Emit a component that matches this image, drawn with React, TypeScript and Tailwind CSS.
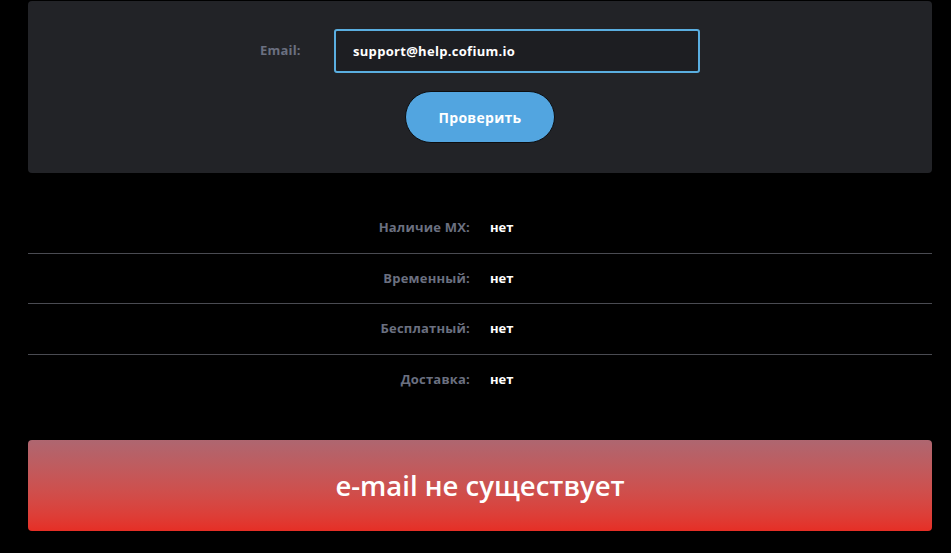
import React from 'react';

const rows = [
  { label: 'Наличие MX:', value: 'нет' },
  { label: 'Временный:', value: 'нет' },
  { label: 'Бесплатный:', value: 'нет' },
  { label: 'Доставка:', value: 'нет' },
];

export default function App() {
  return (
    <div className="min-h-[553px] bg-black pl-[28px] pr-[19px] pt-px pb-[22px] font-['Open_Sans',sans-serif]">
      {/* Check form */}
      <div className="flex h-[172px] flex-col items-center rounded bg-[#222327] pt-[28px]">
        <div className="flex items-center">
          <label className="w-[74px] text-[13px] font-bold tracking-[0.2px] text-[#6b7080]">Email:</label>
          <input
            type="text"
            defaultValue="support@help.cofium.io"
            className="h-[44px] w-[366px] rounded-[3px] border-2 border-[#5aaee0] bg-[#1d1e22] px-[17px] text-[13px] font-bold tracking-[0.3px] text-white outline-none"
          />
        </div>
        <button
          type="button"
          className="mt-[18px] h-[52px] w-[150px] rounded-full border border-[#0d0e10] bg-[#52a5e0] text-[14px] font-bold tracking-[0.3px] text-white"
        >
          Проверить
        </button>
      </div>

      {/* Result rows */}
      <div className="mt-[30px]">
        {rows.map((row, i) => (
          <div
            key={row.label}
            className={`flex h-[50.5px] items-center ${i < rows.length - 1 ? 'border-b border-[#4a4b52]' : ''}`}
          >
            <div className="w-[442px] text-right text-[13px] font-bold tracking-[0.2px] text-[#6b7080]">{row.label}</div>
            <div className="ml-[20px] text-[13px] font-bold text-white">{row.value}</div>
          </div>
        ))}
      </div>

      {/* Status banner */}
      <div className="mt-[35px] flex h-[91px] items-center justify-center rounded bg-gradient-to-b from-[#ae6670] to-[#e62e25]">
        <span className="text-[27.5px] font-semibold text-white">e-mail не существует</span>
      </div>
    </div>
  );
}
